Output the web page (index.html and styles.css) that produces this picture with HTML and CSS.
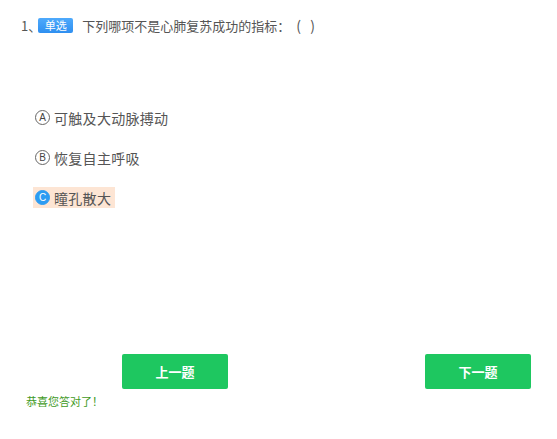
FILE: index.html
```html
<!DOCTYPE html>
<html lang="zh-CN">
<head>
    <meta charset="UTF-8">
    <title>单选题</title>
    <link rel="stylesheet" href="styles.css">
</head>
<body>
    <div class="quiz">
        <div class="question">
            <span class="num">1、</span>
            <span class="type-tag">单选</span>
            <span class="q-text">下列哪项不是心肺复苏成功的指标：<span class="blank">(   )</span></span>
        </div>

        <ul class="options">
            <li class="option"><span class="opt-mark">A</span>可触及大动脉搏动</li>
            <li class="option"><span class="opt-mark">B</span>恢复自主呼吸</li>
            <li class="option selected"><span class="opt-mark">C</span>瞳孔散大</li>
        </ul>

        <div class="actions">
            <button class="nav-button">上一题</button>
            <button class="nav-button">下一题</button>
        </div>

        <div class="tip">恭喜您答对了！</div>
    </div>
</body>
</html>
```

FILE: styles.css
```css
body {
    margin: 0;
    font-family: "Noto Sans CJK SC", "Liberation Sans", sans-serif;
    background: #fff;
    color: #555;
}
.quiz {
    width: 557px;
    height: 439px;
}
.question {
    display: flex;
    align-items: center;
    padding: 15px 0 0 21px;
    height: 20px;
    font-size: 13px;
    color: #555;
    white-space: pre;
}
.num {
    font-size: 13px;
    margin-right: -3px;
}
.type-tag {
    display: inline-block;
    background: linear-gradient(#4eaafc, #2f8ff0);
    color: #fff;
    font-size: 11px;
    line-height: 15px;
    width: 35px;
    text-align: center;
    border-radius: 2px;
    margin: 0 9px 0 0;
}
.blank {
    margin-left: 6px;
    font-size: 14px;
}
.options {
    list-style: none;
    margin: 0;
    padding: 72px 0 0 33px;
}
.option {
    display: flex;
    align-items: center;
    height: 21px;
    font-size: 14px;
    color: #555;
    margin-bottom: 19px;
    padding: 0 2px;
    width: fit-content;
    letter-spacing: 0.3px;
}
.opt-mark {
    display: inline-flex;
    align-items: center;
    justify-content: center;
    box-sizing: border-box;
    width: 15px;
    height: 15px;
    border: 1px solid #666;
    border-radius: 50%;
    font-family: "Liberation Sans", sans-serif;
    font-size: 10px;
    line-height: 1;
    color: #444;
    margin-right: 4px;
    letter-spacing: 0;
}
.option.selected {
    background: #fde5d4;
    padding-right: 4px;
}
.option.selected .opt-mark {
    background: #2d9cf2;
    border-color: #2d9cf2;
    color: #fff;
}
.actions {
    display: flex;
    justify-content: space-between;
    padding: 0 26px 0 122px;
    margin-top: 146px;
}
.nav-button {
    width: 106px;
    height: 35px;
    border: none;
    border-radius: 2px;
    background: #1ec760;
    color: #fff;
    font-family: "Noto Sans CJK SC", sans-serif;
    font-size: 13px;
    font-weight: bold;
    cursor: pointer;
}
.tip {
    padding: 4px 0 0 26px;
    font-size: 11px;
    color: #3f9a1e;
}
```
